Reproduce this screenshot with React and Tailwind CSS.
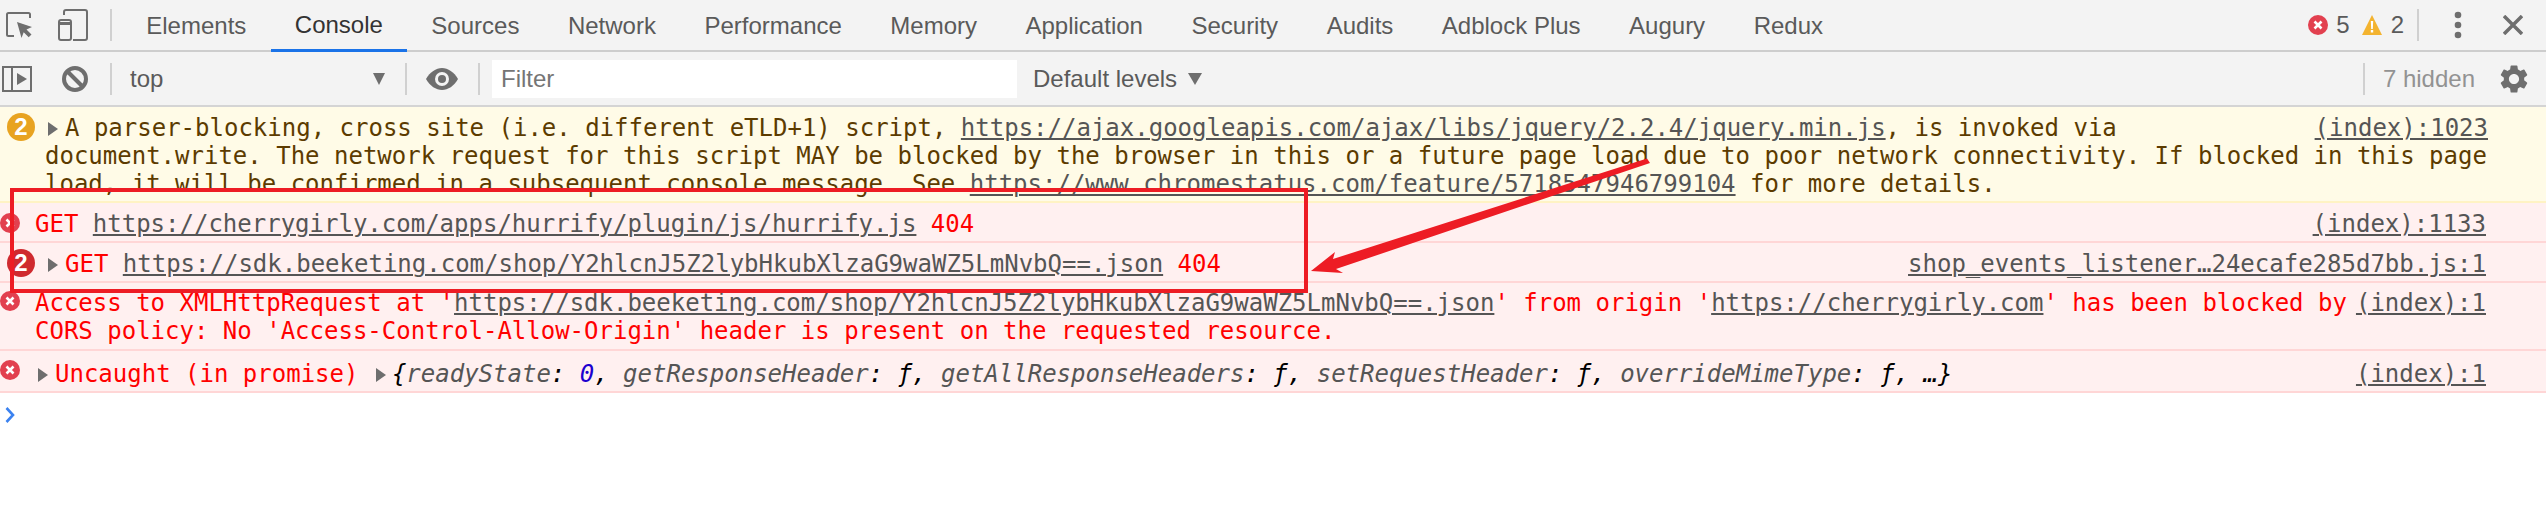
import { MdSettings } from 'react-icons/md'

const tabs = ['Elements', 'Console', 'Sources', 'Network', 'Performance', 'Memory', 'Application', 'Security', 'Audits', 'Adblock Plus', 'Augury', 'Redux']

const mono = "font-['DejaVu_Sans_Mono','Liberation_Mono',monospace] text-[24px] leading-[28px]"

function Sep({ className = '' }) {
  return <div className={`w-[2px] h-[32px] bg-[#d0d0d0] shrink-0 ${className}`} />
}

function ErrorIcon({ className = '' }) {
  return (
    <svg viewBox="0 0 20 20" className={`w-[20px] h-[20px] shrink-0 ${className}`}>
      <circle cx="10" cy="10" r="10" fill="#e2404f" />
      <path d="M6.5 6.5l7 7M13.5 6.5l-7 7" stroke="#fff" strokeWidth="2.6" />
    </svg>
  )
}

function Caret({ className = '' }) {
  return (
    <svg viewBox="0 0 10 14" className={`inline-block w-[10px] h-[14px] ${className}`}>
      <path d="M0 0l10 7-10 7z" fill="#6e6e6e" />
    </svg>
  )
}

function Badge({ color }) {
  return (
    <div className={`w-[28px] h-[28px] rounded-full ml-[7px] flex items-center justify-center text-white text-[24px] font-bold font-['Liberation_Sans',sans-serif] ${color}`}>2</div>
  )
}

function Link({ children }) {
  return <span className="underline text-[#555] decoration-2 underline-offset-2">{children}</span>
}

function Source({ children }) {
  return <span className="float-right underline text-[#555] decoration-2 underline-offset-2">{children}</span>
}

function Key({ children }) {
  return <span className="text-[#555]">{children}</span>
}

export default function App() {
  return (
    <div className="relative w-[2546px] h-[508px] overflow-hidden bg-white font-['Liberation_Sans',sans-serif]">
      <div className="flex items-center h-[52px] bg-[#f3f3f3] border-b-2 border-[#cdcdcd]">
        <svg viewBox="0 0 26 26" className="w-[26px] h-[26px] ml-[6px] shrink-0">
          <path d="M8 24H2.5A1.5 1.5 0 0 1 1 22.500V2.500A1.500 1.500 0 0 1 2.500 1H22.500A1.500 1.500 0 0 1 24 2.500V6" fill="none" stroke="#6e6e6e" strokeWidth="2" />
          <path d="M11 10l15 5-5.500 2.500 5 5-2.800 2.800-5-5L15.500 26z" fill="#6e6e6e" />
        </svg>
        <svg viewBox="0 0 30 32" className="w-[30px] h-[32px] ml-[26px] shrink-0">
          <path d="M6 6V3a2 2 0 0 1 2-2h19a2 2 0 0 1 2 2v26a2 2 0 0 1-2 2H15" fill="none" stroke="#6e6e6e" strokeWidth="2" />
          <rect x="1" y="11" width="12" height="20" rx="2" fill="none" stroke="#6e6e6e" strokeWidth="2" />
          <path d="M1 13h12v3H1z" fill="#6e6e6e" />
        </svg>
        <Sep className="ml-[22px]" />
        <div className="flex ml-[10px] h-full">
          {tabs.map(t => (
            <div key={t} className={`flex items-center px-[24.25px] text-[24px] h-[52px] ${t === 'Console' ? 'text-[#333] border-b-[3px] border-[#1a73e8]' : 'text-[#5a5a5a]'}`}>{t}</div>
          ))}
        </div>
        <div className="flex items-center ml-auto text-[24px] text-[#5a5a5a]">
          <ErrorIcon />
          <span className="ml-[8px]">5</span>
          <svg viewBox="0 0 20 20" className="w-[20px] h-[20px] ml-[12px]">
            <path d="M10 0l10 20H0z" fill="#f3b32f" />
            <path d="M8.800 6h2.400l-.4 8H9.200zM8.800 15h2.400v2.500H8.800z" fill="#fff" />
          </svg>
          <span className="ml-[9px]">2</span>
          <Sep className="ml-[13px]" />
          <svg viewBox="0 0 8 28" className="w-[8px] h-[28px] ml-[35px]">
            <circle cx="4" cy="4" r="3.300" fill="#6e6e6e" />
            <circle cx="4" cy="14" r="3.300" fill="#6e6e6e" />
            <circle cx="4" cy="24" r="3.300" fill="#6e6e6e" />
          </svg>
          <svg viewBox="0 0 20 20" className="w-[20px] h-[20px] ml-[41px] mr-[23px]">
            <path d="M1 1l18 18M19 1L1 19" stroke="#6e6e6e" strokeWidth="3.500" />
          </svg>
        </div>
      </div>

      <div className="flex items-center h-[55px] bg-[#f3f3f3] border-b-2 border-[#d4d4d4]">
        <svg viewBox="0 0 30 26" className="w-[30px] h-[26px] ml-[2px] shrink-0">
          <rect x="1" y="1" width="28" height="24" fill="none" stroke="#6e6e6e" strokeWidth="2" />
          <path d="M10 1v24" stroke="#6e6e6e" strokeWidth="2" />
          <path d="M15 7l10 6-10 6z" fill="#6e6e6e" />
        </svg>
        <svg viewBox="0 0 26 26" className="w-[26px] h-[26px] ml-[30px] shrink-0">
          <circle cx="13" cy="13" r="11" fill="none" stroke="#6e6e6e" strokeWidth="4" />
          <path d="M5.500 5.500l15 15" stroke="#6e6e6e" strokeWidth="4" />
        </svg>
        <Sep className="ml-[22px]" />
        <div className="flex items-center w-[293px] pl-[18px] pr-[20px] text-[24px] text-[#5a5a5a]">
          <span>top</span>
          <svg viewBox="0 0 12 12" className="w-[12px] h-[12px] ml-auto"><path d="M0 0h12L6 12z" fill="#6e6e6e" /></svg>
        </div>
        <Sep />
        <svg viewBox="0 0 32 22" className="w-[32px] h-[22px] ml-[19px] shrink-0">
          <path d="M0 11C4 4 10 0 16 0s12 4 16 11c-4 7-10 11-16 11S4 18 0 11z" fill="#6e6e6e" />
          <circle cx="16" cy="11" r="7" fill="#f3f3f3" />
          <circle cx="16" cy="11" r="4" fill="#6e6e6e" />
        </svg>
        <Sep className="ml-[20px]" />
        <div className="flex items-center w-[525px] h-[38px] ml-[12px] pl-[9px] bg-white text-[24px] text-[#757575]">Filter</div>
        <div className="flex items-center ml-[16px] text-[24px] text-[#5a5a5a]">
          Default levels
          <svg viewBox="0 0 14 12" className="w-[14px] h-[12px] ml-[11px]"><path d="M0 0h14L7 12z" fill="#6e6e6e" /></svg>
        </div>
        <div className="flex items-center ml-auto">
          <Sep />
          <span className="ml-[18px] text-[24px] text-[#929292]">7 hidden</span>
          <MdSettings className="w-[34px] h-[34px] ml-[22px] mr-[15px] text-[#6e6e6e]" />
        </div>
      </div>

      <div className={`${mono}`}>
        <div className="flex pt-[7px] pb-[3px] pr-[58px] bg-[#fffbe7] border-b-2 border-[#fff3c4] text-[#5c3b00]">
          <div className="w-[45px] shrink-0 -mt-[1px]"><Badge color="bg-[#e8a321]" /></div>
          <div className="flex-1 min-w-0">
            <Source>(index):1023</Source>
            <Caret className="ml-[3px] mr-[7px]" />A parser-blocking, cross site (i.e. different eTLD+1) script, <Link>https://ajax.googleapis.com/ajax/libs/jquery/2.2.4/jquery.min.js</Link>, is invoked via document.write. The network request for this script MAY be blocked by the browser in this or a future page load due to poor network connectivity. If blocked in this page load, it will be confirmed in a subsequent console message. See <Link>https://www.chromestatus.com/feature/5718547946799104</Link> for more details.
          </div>
        </div>

        <div className="flex pt-[7px] pb-[3px] pr-[60px] bg-[#fff0f0] border-b-2 border-[#ffd6d6] text-[#ff0000]">
          <div className="w-[35px] shrink-0 pt-[3px]"><ErrorIcon /></div>
          <div className="flex-1 min-w-0">
            <Source>(index):1133</Source>
            GET <Link>https://cherrygirly.com/apps/hurrify/plugin/js/hurrify.js</Link> 404
          </div>
        </div>

        <div className="flex pt-[7px] pb-[3px] pr-[60px] bg-[#fff0f0] border-b-2 border-[#ffd6d6] text-[#ff0000]">
          <div className="w-[45px] shrink-0 -mt-[1px]"><Badge color="bg-[#cf2a2f]" /></div>
          <div className="flex-1 min-w-0">
            <Source>shop_events_listener…24ecafe285d7bb.js:1</Source>
            <Caret className="ml-[3px] mr-[7px]" />GET <Link>https://sdk.beeketing.com/shop/Y2hlcnJ5Z2lybHkubXlzaG9waWZ5LmNvbQ==.json</Link> 404
          </div>
        </div>

        <div className="flex pt-[6px] pb-[4px] pr-[60px] bg-[#fff0f0] border-b-2 border-[#ffd6d6] text-[#ff0000]">
          <div className="w-[35px] shrink-0 pt-[2px]"><ErrorIcon /></div>
          <div className="flex-1 min-w-0">
            <Source>(index):1</Source>
            Access to XMLHttpRequest at '<Link>https://sdk.beeketing.com/shop/Y2hlcnJ5Z2lybHkubXlzaG9waWZ5LmNvbQ==.json</Link>' from origin '<Link>https://cherrygirly.com</Link>' has been blocked by CORS policy: No 'Access-Control-Allow-Origin' header is present on the requested resource.
          </div>
        </div>

        <div className="flex pt-[9px] pb-[3px] pr-[60px] bg-[#fff0f0] border-b-2 border-[#ffd6d6] text-[#ff0000]">
          <div className="w-[35px] shrink-0"><ErrorIcon /></div>
          <div className="flex-1 min-w-0">
            <Source>(index):1</Source>
            <Caret className="ml-[3px] mr-[7px]" />Uncaught (in promise) <Caret className="ml-[3px] mr-[6px]" />
            <span className="italic text-black">{'{'}<Key>readyState</Key>: <span className="text-[#1c00cf]">0</span>, <Key>getResponseHeader</Key>: ƒ, <Key>getAllResponseHeaders</Key>: ƒ, <Key>setRequestHeader</Key>: ƒ, <Key>overrideMimeType</Key>: ƒ, …{'}'}</span>
          </div>
        </div>

        <div className="pt-[14px] pl-[5px]">
          <svg viewBox="0 0 10 16" className="w-[10px] h-[16px]">
            <path d="M1.500 1l6.500 7-6.500 7" fill="none" stroke="#3b82f0" strokeWidth="2.600" />
          </svg>
        </div>
      </div>

      <div className="absolute left-[10px] top-[188px] w-[1298px] h-[105px] border-[4px] border-[#ed1c24]" />
      <svg viewBox="0 0 2546 508" className="absolute inset-0 w-[2546px] h-[508px] pointer-events-none">
        <path d="M1647 158.500L1650 163 1336 269 1343 273 1311 271 1335 252 1333 259z" fill="#ed1c24" />
      </svg>
    </div>
  )
}
